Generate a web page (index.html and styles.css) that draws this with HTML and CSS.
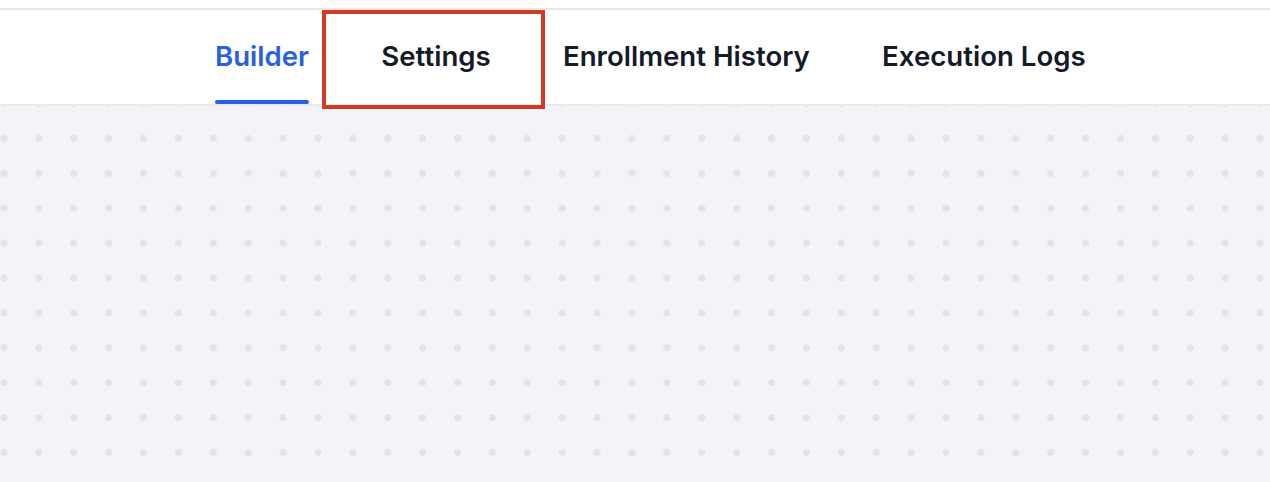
FILE: index.html
```html
<!DOCTYPE html>
<html lang="en">
<head>
<meta charset="utf-8">
<title>Workflow</title>
<link rel="stylesheet" href="styles.css">
</head>
<body>
<div class="page">
  <div class="top-strip"></div>
  <header class="tabbar">
    <nav class="tabs">
      <a class="tab tab-active">Builder</a>
      <a class="tab tab-settings">Settings<span class="highlight"></span></a>
      <a class="tab">Enrollment History</a>
      <a class="tab">Execution Logs</a>
    </nav>
  </header>
  <main class="canvas"></main>
</div>
</body>
</html>
```

FILE: styles.css
```css
html, body {
  margin: 0;
  padding: 0;
  height: 100%;
  background: #ffffff;
}

.page {
  display: flex;
  flex-direction: column;
  height: 482px;
  overflow: hidden;
  font-family: Inter, "Liberation Sans", sans-serif;
}

.top-strip {
  height: 8px;
  background: #ffffff;
  flex: none;
}

.tabbar {
  flex: none;
  height: 94px;
  background: #ffffff;
  border-top: 2px solid #e7e7eb;
  border-bottom: 2px solid #e9e9ee;
  position: relative;
  z-index: 1;
}

.tabs {
  display: flex;
  height: 100%;
  padding-left: 215px;
  gap: 72.3px;
}

.tab {
  position: relative;
  display: flex;
  align-items: center;
  height: 100%;
  box-sizing: border-box;
  padding-bottom: 2px;
  font-size: 27.6px;
  font-weight: 600;
  color: #141a29;
  text-decoration: none;
  white-space: nowrap;
}

.tab-active {
  color: #2a5fe3;
}

.tab-active::after {
  content: "";
  position: absolute;
  left: 0;
  right: 0;
  bottom: 0;
  height: 4px;
  border-radius: 3px;
  background: #2a5fe3;
}

.highlight {
  position: absolute;
  left: -59.3px;
  top: 0;
  width: 223px;
  height: 99px;
  box-sizing: border-box;
  border: 4.5px solid #d13b22;
}

.canvas {
  flex: 1;
  background-color: #f3f4f8;
  background-image: radial-gradient(circle, #e4e4e7 3.2px, rgba(228, 228, 231, 0) 3.9px);
  background-size: 34.9px 34.9px;
  background-position: -13.5px 15px;
}
```
